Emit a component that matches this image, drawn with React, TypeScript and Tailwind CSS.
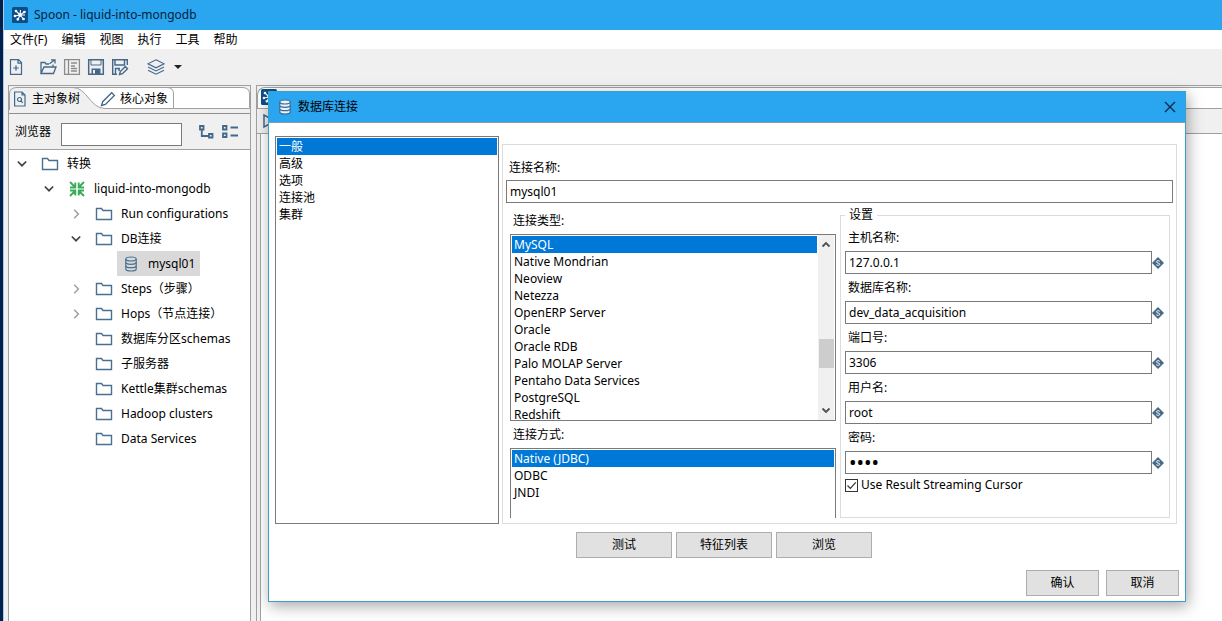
import React, { useState } from "react";
import clsx from "clsx";

type TreeNode = {
	label: string;
	level: 0 | 1 | 2 | 3;
	icon: "folder" | "transformation" | "database";
	state?: "open" | "closed";
	selected?: boolean;
};

const treeNodes: TreeNode[] = [
	{ label: "转换", level: 0, icon: "folder", state: "open" },
	{ label: "liquid-into-mongodb", level: 1, icon: "transformation", state: "open" },
	{ label: "Run configurations", level: 2, icon: "folder", state: "closed" },
	{ label: "DB连接", level: 2, icon: "folder", state: "open" },
	{ label: "mysql01", level: 3, icon: "database", selected: true },
	{ label: "Steps（步骤）", level: 2, icon: "folder", state: "closed" },
	{ label: "Hops（节点连接）", level: 2, icon: "folder", state: "closed" },
	{ label: "数据库分区schemas", level: 2, icon: "folder" },
	{ label: "子服务器", level: 2, icon: "folder" },
	{ label: "Kettle集群schemas", level: 2, icon: "folder" },
	{ label: "Hadoop clusters", level: 2, icon: "folder" },
	{ label: "Data Services", level: 2, icon: "folder" },
];

const levelPadding = ["pl-[7px]", "pl-[34px]", "pl-[61px]", "pl-[88px]"];

const menus = ["文件(F)", "编辑", "视图", "执行", "工具", "帮助"];

const sections = ["一般", "高级", "选项", "连接池", "集群"];

const connectionTypes = [
	"MySQL",
	"Native Mondrian",
	"Neoview",
	"Netezza",
	"OpenERP Server",
	"Oracle",
	"Oracle RDB",
	"Palo MOLAP Server",
	"Pentaho Data Services",
	"PostgreSQL",
	"Redshift",
];

const accessMethods = ["Native (JDBC)", "ODBC", "JNDI"];

const settings = [
	{ id: "host", label: "主机名称:", value: "127.0.0.1", type: "text" },
	{ id: "database", label: "数据库名称:", value: "dev_data_acquisition", type: "text" },
	{ id: "port", label: "端口号:", value: "3306", type: "text" },
	{ id: "user", label: "用户名:", value: "root", type: "text" },
	{ id: "password", label: "密码:", value: "root", type: "password" },
];

const SpoonLogo: React.FC = () => (
	<svg className="size-4 shrink-0" viewBox="0 0 16 16">
		<rect width="16" height="16" rx="1.5" fill="#0b4f8a" />
		<g stroke="#fff" strokeWidth="1.1" fill="#fff">
			<path d="M8 8 4 4M8 8l.5-5M8 8l4.5-3M8 8h5M8 8l3.5 4M8 8l-2 4.5M8 8 3 9" />
			<circle cx="4" cy="4" r="0.8" />
			<circle cx="12.4" cy="5" r="0.8" />
			<circle cx="11.5" cy="12" r="0.8" />
			<circle cx="5.8" cy="12.3" r="0.8" />
			<circle cx="3" cy="9" r="0.8" />
			<circle cx="8" cy="8" r="1.2" />
		</g>
	</svg>
);

const FolderIcon: React.FC = () => (
	<svg className="h-4 w-[18px] shrink-0" viewBox="0 0 18 16" fill="none" stroke="#4a7091" strokeWidth="1.4">
		<path d="M1.5 13.5V2.5h5l1.5 2h8.500v9z" />
	</svg>
);

const TransformationIcon: React.FC = () => (
	<svg className="h-4 w-[18px] shrink-0" viewBox="0 0 18 16" fill="none" stroke="#3bab5b" strokeWidth="1.9">
		<path d="M2 1l5 5M7.300 1.500v5H2M16 1l-5 5M10.700 1.500v5H16M2 15l5-5M7.300 14.500v-5H2M16 15l-5-5M10.700 14.500v-5H16" />
	</svg>
);

const DatabaseIcon: React.FC<{ light?: boolean }> = ({ light }) => (
	<svg
		className="h-4 w-[14px] shrink-0"
		viewBox="0 0 14 16"
		fill={light ? "#e4f3fd" : "none"}
		stroke={light ? "#3c6a92" : "#4a7091"}
		strokeWidth="1.2"
	>
		<path d="M1.8 3v10c0 1.1 2.3 2 5.2 2s5.2-.9 5.2-2V3" />
		<ellipse cx="7" cy="3" rx="5.2" ry="2" />
		<path d="M1.8 6.3c0 1.1 2.3 2 5.2 2s5.2-.9 5.2-2M1.8 9.7c0 1.1 2.3 2 5.2 2s5.2-.9 5.2-2" />
	</svg>
);

const VariableIcon: React.FC = () => (
	<svg className="size-3 shrink-0" viewBox="0 0 12 12">
		<path d="M6 0l6 6-6 6-6-6z" fill="#476a88" />
		<path
			d="M7.800 4.400C7.400 3.500 4.400 3.300 4.400 4.800c0 1.500 3.400.9 3.400 2.400 0 1.500-3.100 1.400-3.600.4"
			fill="none"
			stroke="#fff"
			strokeWidth="0.9"
		/>
	</svg>
);

const Chevron: React.FC<{ state?: TreeNode["state"] }> = ({ state }) => (
	<svg className="size-3 shrink-0" viewBox="0 0 12 12" fill="none">
		{state === "open" && <path d="M1.800 3.500 6 7.700l4.200-4.200" stroke="#444" strokeWidth="1.7" />}
		{state === "closed" && <path d="M4.200 1.800 8.400 6l-4.200 4.200" stroke="#a0a0a0" strokeWidth="1.5" />}
	</svg>
);

const Toolbar: React.FC = () => {
	const button = "flex size-6 items-center justify-center";
	const icon = "h-[18px] w-[18px]";

	return (
		<div className="flex h-9 items-center bg-[#f0f0f0]">
			<button type="button" title="新建" className={button}>
				<svg className={icon} viewBox="0 0 18 18" fill="none" stroke="#44688a" strokeWidth="1.2">
					<path d="M3.5 1.6h8l3 3v11.8h-11zM11 1.6v3.5h3.5M9 7.2v5.6M6.2 10h5.6" />
				</svg>
			</button>
			<button type="button" title="打开" className={clsx(button, "ml-2")}>
				<svg className={icon} viewBox="0 0 18 18" fill="none" stroke="#44688a" strokeWidth="1.3">
					<path d="M2 15.5V4.5h4l1 1.5h3M2 15.5l3-6.5h12l-2.5 6.5zM14 9V6.5M10.5 5.8 15.5 2M12 1.8h4v3.8" />
				</svg>
			</button>
			<button type="button" title="浏览资源库" className={button}>
				<svg className={icon} viewBox="0 0 18 18" fill="none" stroke="#8b8b8b" strokeWidth="1.3">
					<path d="M1.6 1.6h14.8v14.8H1.6zM5.5 1.6v14.8M8 5h6M8 8h4M8 10.5h6M8 13h6" />
				</svg>
			</button>
			<button type="button" title="保存" className={button}>
				<svg className={icon} viewBox="0 0 18 18" fill="none" stroke="#44688a" strokeWidth="1.5">
					<path d="M1.7 1.7h14.6v14.6H1.7z" />
					<path d="M4 2v5h10V2" strokeWidth="1" />
					<path d="M4.5 10.500h9v6h-9z" fill="#44688a" stroke="none" />
					<path d="M6 12h2v3.500H6z" fill="#f0f0f0" stroke="none" />
				</svg>
			</button>
			<button type="button" title="另存为" className={button}>
				<svg className={icon} viewBox="0 0 18 18" fill="none" stroke="#44688a" strokeWidth="1.4">
					<path d="M6 16.3H1.7V1.7h14.6V7M4 2v5h9.5V2M4.5 16v-5.500H9" />
					<path d="m8.500 16.500.8-3 5-5 2.200 2.200-5 5zM7 12h2" />
				</svg>
			</button>
			<button type="button" title="视图" className={clsx(button, "ml-3")}>
				<svg className={icon} viewBox="0 0 18 18" fill="none" stroke="#44688a" strokeWidth="1.1">
					<path d="m9 1.8 8 4-8 4-8-4zM1 9l8 4 8-4M1 12.2l8 4 8-4" />
				</svg>
			</button>
			<svg className="ml-1.5 h-1 w-2" viewBox="0 0 8 4">
				<path d="M0 0h8L4 4z" fill="#222" />
			</svg>
		</div>
	);
};

type ListBoxProps = {
	label: string;
	items: string[];
};

const ListBox: React.FC<ListBoxProps> = ({ label, items }) => {
	const [selected, setSelected] = useState(items[0]);

	return (
		<ul role="listbox" aria-label={label} className="min-w-0 flex-1 overflow-hidden p-px">
			{items.map((item) => (
				<li
					key={item}
					role="option"
					aria-selected={item === selected}
					onClick={() => setSelected(item)}
					className={clsx(
						"h-[17px] px-0.5 leading-[17px] whitespace-nowrap",
						item === selected && "bg-[#0078d7] text-white"
					)}
				>
					{item}
				</li>
			))}
		</ul>
	);
};

const ObjectTree: React.FC = () => (
	<ul className="flex-1 bg-white pt-px">
		{treeNodes.map((node) => (
			<li key={node.label} className={clsx("flex h-[25px] items-center", levelPadding[node.level])}>
				<Chevron state={node.state} />
				<span
					className={clsx(
						"flex h-full items-center whitespace-nowrap",
						node.selected ? "ml-2 gap-2.5 bg-[#d9d9d9] pr-[5px] pl-[7px]" : "ml-[13px] gap-2"
					)}
				>
					{node.icon === "folder" && <FolderIcon />}
					{node.icon === "transformation" && <TransformationIcon />}
					{node.icon === "database" && <DatabaseIcon />}
					{node.label}
				</span>
			</li>
		))}
	</ul>
);

const Sidebar: React.FC = () => (
	<aside className="flex w-[243px] shrink-0 flex-col border-x border-t border-[#a0a0a0] bg-[#f0f0f0]">
		<div className="relative h-7 shrink-0 border-b border-[#909090]">
			<svg className="absolute top-0 left-0 h-6 w-full" viewBox="0 0 241 24" preserveAspectRatio="none">
				<path d="M0 22.500V8Q0 1.500 8 1.500h225Q241 1.500 241 8v14.500z" fill="#fff" />
				<path d="M0 24V8Q0 1.500 8 1.500h56c14 0 17 21 32 21V24z" fill="#f0f0f0" />
				<path
					d="M.5 24V8Q.5 1.500 8 1.500h225q7.500 0 7.500 6.500v14.500H96c-15 0-18-21-32-21M158 1.500q6.500 0 6.500 6.500v14.500"
					fill="none"
					stroke="#a0a0a0"
				/>
			</svg>
			<div role="tablist" className="relative flex h-[25px] items-center pl-[3px]">
				<button type="button" role="tab" aria-selected="true" className="flex items-center gap-1">
					<svg className="size-4" viewBox="0 0 16 16" fill="none" stroke="#44688a" strokeWidth="1.2">
						<path d="M2.600 1h7.400l3 3v11H2.600zM10 1v3h3" />
						<circle cx="7.500" cy="8.500" r="2" />
						<path d="m9 10 1.800 1.800" />
					</svg>
					主对象树
				</button>
				<button type="button" role="tab" aria-selected="false" className="ml-5 flex items-center gap-1">
					<svg className="size-4" viewBox="0 0 16 16" fill="none" stroke="#44688a" strokeWidth="1.300">
						<path d="m1.500 14.500 1.200-3.800 9-9 2.700 2.700-9 9z" />
					</svg>
					核心对象
				</button>
			</div>
		</div>
		<div className="flex h-9 shrink-0 items-center border-b border-[#a0a0a0] pt-px pl-1.5">
			<label htmlFor="browser">浏览器</label>
			<input
				id="browser"
				type="text"
				className="mt-1 ml-2.5 h-[23px] w-[121px] border border-[#7a7a7a] bg-white px-1 outline-none"
			/>
			<button type="button" title="展开" className="ml-4 size-4">
				<svg className="size-4" viewBox="0 0 16 16" fill="none" stroke="#44688a" strokeWidth="1.800">
					<path d="M2 2h3.500v3.500H2zM11 10h3.500v3.500H11zM3.800 6v6H11" />
				</svg>
			</button>
			<button type="button" title="收起" className="ml-2 size-4">
				<svg className="h-4 w-[18px]" viewBox="0 0 18 16" fill="none" stroke="#44688a" strokeWidth="1.800">
					<path d="M1 2h3.500v3.500H1zM1 9.500h3.500V13H1zM8.500 3.500H16M8.500 11.500H16" />
				</svg>
			</button>
		</div>
		<ObjectTree />
	</aside>
);

const EditorArea: React.FC = () => (
	<main className="ml-[5px] flex min-w-0 flex-1 flex-col border-t border-l border-[#a0a0a0] bg-[#f0f0f0]">
		<div className="mt-px h-[22px] rounded-tl-lg border-t border-b border-l border-[#a0a0a0] bg-white pt-px pl-[3px]">
			<SpoonLogo />
		</div>
		<div className="flex h-[25px] items-center border-b border-[#a0a0a0] pl-1.5">
			<svg className="size-4" viewBox="0 0 16 16" fill="none" stroke="#44688a" strokeWidth="1.500">
				<path d="M1 2v12l11-6z" />
			</svg>
		</div>
		<div className="ml-[3px] flex-1 border-l border-[#a0a0a0] bg-white" />
	</main>
);

const SettingsFieldset: React.FC = () => (
	<fieldset className="min-w-0 border border-[#dcdcdc] px-1 pt-px">
		<legend className="px-1 leading-4">设置</legend>
		{settings.map((field) => (
			<div key={field.id}>
				<label htmlFor={field.id} className="flex h-[27px] items-center pl-[3px]">
					{field.label}
				</label>
				<div className="flex items-center pr-px">
					<input
						id={field.id}
						type={field.type}
						defaultValue={field.value}
						className={clsx(
							"h-[23px] min-w-0 flex-1 border border-[#7a7a7a] bg-white px-[3px] outline-none",
							field.type === "password" && "text-xl"
						)}
					/>
					<VariableIcon />
				</div>
			</div>
		))}
		<label className="mt-px flex h-5 items-center gap-[3px]">
			<span className="relative size-[13px]">
				<input
					type="checkbox"
					defaultChecked
					className="peer block size-[13px] appearance-none border border-[#333] bg-white"
				/>
				<svg
					className="pointer-events-none absolute inset-0 hidden size-[13px] peer-checked:block"
					viewBox="0 0 13 13"
					fill="none"
					stroke="#333"
					strokeWidth="1.200"
				>
					<path d="m2.500 6.500 2.800 2.800 5.500-6" />
				</svg>
			</span>
			Use Result Streaming Cursor
		</label>
	</fieldset>
);

const ConnectionDialog: React.FC = () => {
	const testButton = "h-[26px] w-24 border border-[#adadad] bg-[#e1e1e1]";
	const actionButton = "h-[26px] w-[73px] border border-[#adadad] bg-[#e1e1e1]";

	return (
		<div
			role="dialog"
			aria-labelledby="dialog-title"
			className="absolute top-[91px] right-9 left-[268px] border border-[#3c9fc6] bg-white shadow-[2px_4px_14px_rgba(0,0,0,0.35)]"
		>
			<div className="flex h-[31px] items-center border-b border-[#8a9aa5] bg-[#2aa5ef] pr-2 pl-[9px]">
				<DatabaseIcon light />
				<h2 id="dialog-title" className="ml-1.5 flex-1">
					数据库连接
				</h2>
				<button type="button" title="关闭" className="flex size-3.5 items-center justify-center">
					<svg className="size-3" viewBox="0 0 12 12" stroke="#0b2a44" strokeWidth="1.300">
						<path d="m1 1 10 10M11 1 1 11" />
					</svg>
				</button>
			</div>
			<div className="px-1.5 pt-[13px] pb-[5px]">
				<div className="flex gap-[3px]">
					<div className="flex w-56 shrink-0 border border-[#7a7a7a]">
						<ListBox label="类别" items={sections} />
					</div>
					<div className="mt-2 mr-0.5 min-w-0 flex-1 border border-[#dcdcdc] pt-[11px] pb-[5px]">
						<div className="px-[3px]">
							<label htmlFor="connection-name" className="flex h-6 items-center pl-[3px]">
								连接名称:
							</label>
							<input
								id="connection-name"
								type="text"
								defaultValue="mysql01"
								className="block h-[23px] w-full border border-[#7a7a7a] bg-white px-[3px] outline-none"
							/>
						</div>
						<div className="mt-1 grid grid-cols-2 pr-1.5 pl-[7px]">
							<div className="min-w-0 pr-1">
								<div className="flex h-[27px] items-center pl-[3px]">连接类型:</div>
								<div className="flex h-[187px] border border-[#7a7a7a]">
									<ListBox label="连接类型" items={connectionTypes} />
									<div className="mr-px flex w-4 flex-col items-center bg-[#f0f0f0]">
										<svg className="mt-1 size-3" viewBox="0 0 12 12" fill="none" stroke="#505050" strokeWidth="1.800">
											<path d="M2.500 7.500 6 4l3.500 3.500" />
										</svg>
										<div className="mt-[88px] h-[29px] w-[15px] bg-[#cdcdcd]" />
										<svg className="mt-auto mb-1 size-3" viewBox="0 0 12 12" fill="none" stroke="#505050" strokeWidth="1.800">
											<path d="M2.500 4.500 6 8l3.500-3.500" />
										</svg>
									</div>
								</div>
								<div className="flex h-[27px] items-center pl-[3px]">连接方式:</div>
								<div className="flex h-[70px] border border-b-0 border-[#7a7a7a]">
									<ListBox label="连接方式" items={accessMethods} />
								</div>
							</div>
							<SettingsFieldset />
						</div>
					</div>
				</div>
				<div className="mt-2 flex justify-center gap-1 pr-1.5">
					<button type="button" className={testButton}>
						测试
					</button>
					<button type="button" className={testButton}>
						特征列表
					</button>
					<button type="button" className={testButton}>
						浏览
					</button>
				</div>
				<div className="mt-3 flex justify-end gap-[7px]">
					<button type="button" className={actionButton}>
						确认
					</button>
					<button type="button" className={actionButton}>
						取消
					</button>
				</div>
			</div>
		</div>
	);
};

const App: React.FC = () => {
	return (
		<div className="relative flex min-h-screen overflow-hidden bg-[#f0f0f0] font-['Noto_Sans','Noto_Sans_CJK_SC',sans-serif] text-[12px] leading-4 text-black">
			<div className="w-1 shrink-0 border-r border-[#a8cdea] bg-[#04204a]" />
			<div className="flex min-w-0 flex-1 flex-col">
				<header className="flex h-[30px] items-center gap-1.5 bg-[#2aa5ef] pl-2">
					<SpoonLogo />
					<h1 className="text-[#06233d]">Spoon - liquid-into-mongodb</h1>
				</header>
				<nav className="flex h-[19px] items-center gap-3.5 bg-white pl-1.5">
					{menus.map((menu) => (
						<button key={menu} type="button">
							{menu}
						</button>
					))}
				</nav>
				<Toolbar />
				<div className="flex flex-1 pl-1">
					<Sidebar />
					<EditorArea />
				</div>
			</div>
			<ConnectionDialog />
		</div>
	);
};

export default App;
